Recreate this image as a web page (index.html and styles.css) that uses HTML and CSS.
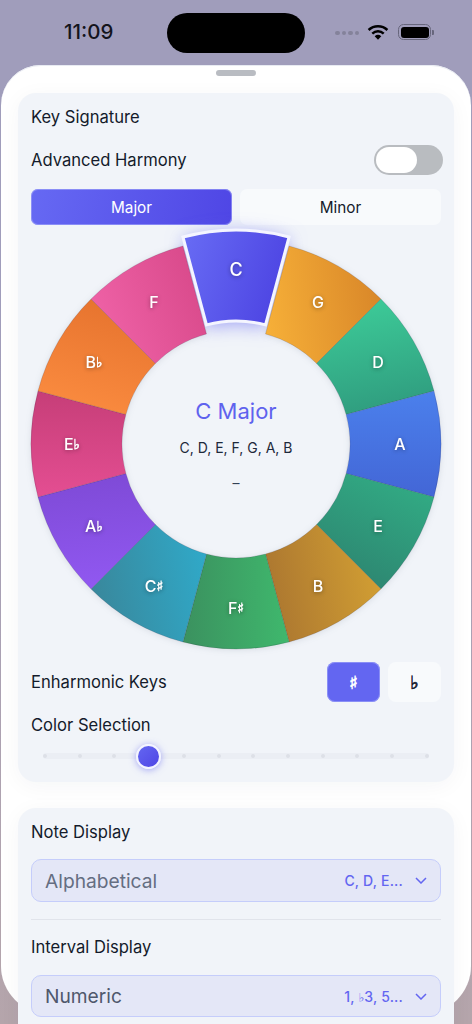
FILE: index.html
```html
<!DOCTYPE html>
<html lang="en">
<head>
<meta charset="utf-8">
<title>Key Signature</title>
<link rel="stylesheet" href="styles.css">
</head>
<body>
<div class="phone">
  <header class="status">
    <span class="time">11:09</span>
    <span class="island"></span>
    <span class="status-icons">
      <span class="signal"><i></i><i></i><i></i><i></i></span>
      <svg class="wifi" width="22" height="16" viewBox="0 0 22 16">
        <path class="wifi-arc" d="M1.6 6 A13.6 13.6 0 0 1 20.4 6"/>
        <path class="wifi-arc" d="M5.3 9.6 A8.4 8.4 0 0 1 16.7 9.6"/>
        <path class="wifi-dot" d="M7.7 12.2 L11 15.8 L14.3 12.2 A5 5 0 0 0 7.7 12.2Z"/>
      </svg>
      <span class="battery"><span class="battery-fill"></span></span>
      <span class="battery-cap"></span>
    </span>
  </header>

  <main class="sheet">
    <div class="grabber"></div>

    <section class="card card-key">
      <div class="label">Key Signature</div>
      <div class="row row-harmony">
        <span class="label">Advanced Harmony</span>
        <span class="toggle"><span class="toggle-thumb"></span></span>
      </div>
      <div class="segmented">
        <button class="seg seg-on">Major</button>
        <button class="seg">Minor</button>
      </div>

      <div class="wheel">
        <svg class="wheel-svg" width="410" height="410" viewBox="-205 -205 410 410">
          <defs>
            <linearGradient id="gC" x1="0" y1="0.3" x2="1" y2="0.6"><stop offset="0" stop-color="#6669f3"/><stop offset="1" stop-color="#4c43e2"/></linearGradient>
            <linearGradient id="gG" x1="0" y1="0.6" x2="1" y2="0.45"><stop offset="0" stop-color="#f6af38"/><stop offset="1" stop-color="#d98729"/></linearGradient>
            <linearGradient id="gD" x1="0.4" y1="0" x2="0.6" y2="1"><stop offset="0" stop-color="#3dcb98"/><stop offset="1" stop-color="#2f9b7e"/></linearGradient>
            <linearGradient id="gA" x1="0" y1="0" x2="0" y2="1"><stop offset="0" stop-color="#4b80ec"/><stop offset="1" stop-color="#4366d6"/></linearGradient>
            <linearGradient id="gE" x1="0.8" y1="0" x2="0.3" y2="1"><stop offset="0" stop-color="#32ad85"/><stop offset="1" stop-color="#2d8470"/></linearGradient>
            <linearGradient id="gB" x1="1" y1="0.4" x2="0" y2="0.6"><stop offset="0" stop-color="#d29f33"/><stop offset="1" stop-color="#ab7630"/></linearGradient>
            <linearGradient id="gFs" x1="1" y1="0.5" x2="0" y2="0.5"><stop offset="0" stop-color="#3fb86d"/><stop offset="1" stop-color="#3b915f"/></linearGradient>
            <linearGradient id="gCs" x1="1" y1="0.4" x2="0" y2="0.6"><stop offset="0" stop-color="#30a8c7"/><stop offset="1" stop-color="#39879b"/></linearGradient>
            <linearGradient id="gAb" x1="0.5" y1="1" x2="0.4" y2="0"><stop offset="0" stop-color="#9158f1"/><stop offset="1" stop-color="#7e4ad6"/></linearGradient>
            <linearGradient id="gEb" x1="0" y1="1" x2="0" y2="0"><stop offset="0" stop-color="#e44e92"/><stop offset="1" stop-color="#c63e78"/></linearGradient>
            <linearGradient id="gBb" x1="0.3" y1="1" x2="0.6" y2="0"><stop offset="0" stop-color="#fb8c40"/><stop offset="1" stop-color="#e6732e"/></linearGradient>
            <linearGradient id="gF" x1="0" y1="0.7" x2="1" y2="0.3"><stop offset="0" stop-color="#f063a8"/><stop offset="1" stop-color="#d8498a"/></linearGradient>
          </defs>
          <path class="wedge-glow" d="M-53.06-207.01A205 205 0 0 1 53.06-207.01L29.51-119.12A114 114 0 0 0 -29.51-119.12Z"/>
          <g id="wedges" class="wedges">
            <path fill="url(#gG)" d="M53.06-198.01A205 205 0 0 1 144.96-144.96L80.61-80.61A114 114 0 0 0 29.51-110.12Z"/>
            <path fill="url(#gD)" d="M144.96-144.96A205 205 0 0 1 198.01-53.06L110.12-29.51A114 114 0 0 0 80.61-80.61Z"/>
            <path fill="url(#gA)" d="M198.01-53.06A205 205 0 0 1 198.01 53.06L110.12 29.51A114 114 0 0 0 110.12-29.51Z"/>
            <path fill="url(#gE)" d="M198.01 53.06A205 205 0 0 1 144.96 144.96L80.61 80.61A114 114 0 0 0 110.12 29.51Z"/>
            <path fill="url(#gB)" d="M144.96 144.96A205 205 0 0 1 53.06 198.01L29.51 110.12A114 114 0 0 0 80.61 80.61Z"/>
            <path fill="url(#gFs)" d="M53.06 198.01A205 205 0 0 1 -53.06 198.01L-29.51 110.12A114 114 0 0 0 29.51 110.12Z"/>
            <path fill="url(#gCs)" d="M-53.06 198.01A205 205 0 0 1 -144.96 144.96L-80.61 80.61A114 114 0 0 0 -29.51 110.12Z"/>
            <path fill="url(#gAb)" d="M-144.96 144.96A205 205 0 0 1 -198.01 53.06L-110.12 29.51A114 114 0 0 0 -80.61 80.61Z"/>
            <path fill="url(#gEb)" d="M-198.01 53.06A205 205 0 0 1 -198.01-53.06L-110.12-29.51A114 114 0 0 0 -110.12 29.51Z"/>
            <path fill="url(#gBb)" d="M-198.01-53.06A205 205 0 0 1 -144.96-144.96L-80.61-80.61A114 114 0 0 0 -110.12-29.51Z"/>
            <path fill="url(#gF)" d="M-144.96-144.96A205 205 0 0 1 -53.06-198.01L-29.51-110.12A114 114 0 0 0 -80.61-80.61Z"/>
          </g>
          <path class="wedge-on" fill="url(#gC)" d="M-53.06-207.01A205 205 0 0 1 53.06-207.01L29.51-119.12A114 114 0 0 0 -29.51-119.12Z"/>
          <g class="keys">
            <text class="key-on" x="0" y="-175">C</text>
            <text x="82" y="-142">G</text>
            <text x="142" y="-82">D</text>
            <text x="164" y="0">A</text>
            <text x="142" y="82">E</text>
            <text x="82" y="142">B</text>
            <text x="0" y="164">F<tspan class="acc">♯</tspan></text>
            <text x="-82" y="142">C<tspan class="acc">♯</tspan></text>
            <text x="-142" y="82">A<tspan class="acc">♭</tspan></text>
            <text x="-164" y="0">E<tspan class="acc">♭</tspan></text>
            <text x="-142" y="-82">B<tspan class="acc">♭</tspan></text>
            <text x="-82" y="-142">F</text>
          </g>
        </svg>
        <div class="wheel-center">
          <div class="key-name">C Major</div>
          <div class="key-notes">C, D, E, F, G, A, B</div>
          <div class="key-dash">–</div>
        </div>
      </div>

      <div class="row row-enh">
        <span class="label">Enharmonic Keys</span>
        <span class="enh">
          <button class="enh-btn enh-on">♯</button>
          <button class="enh-btn">♭</button>
        </span>
      </div>

      <div class="label label-color">Color Selection</div>
      <div class="slider">
        <i></i><i></i><i></i><i></i><i></i><i></i><i></i><i></i><i></i><i></i><i></i><i></i>
        <span class="slider-thumb"></span>
      </div>
    </section>

    <section class="card card-display">
      <div class="label">Note Display</div>
      <div class="select">
        <span class="select-value">Alphabetical</span>
        <span class="select-hint">C, D, E...</span>
        <svg class="chevron" width="12" height="7" viewBox="0 0 12 7"><path d="M1 1 L6 6 L11 1"/></svg>
      </div>
      <div class="divider"></div>
      <div class="label">Interval Display</div>
      <div class="select select-last">
        <span class="select-value select-value-dark">Numeric</span>
        <span class="select-hint">1, <span class="hint-flat">♭</span>3, 5...</span>
        <svg class="chevron" width="12" height="7" viewBox="0 0 12 7"><path d="M1 1 L6 6 L11 1"/></svg>
      </div>
    </section>
  </main>
</div>
</body>
</html>
```

FILE: styles.css
```css
* { box-sizing: border-box; }
html, body { margin: 0; height: 100%; }
body {
  font-family: Inter, "DejaVu Sans", sans-serif;
  color: #1e293b;
  overflow: hidden;
  background: linear-gradient(180deg, #a09dbb 0%, #a09dbb 30%, #b5a5ab 100%);
}
button { font: inherit; border: 0; padding: 0; color: inherit; }
.phone { width: 472px; height: 1024px; overflow: hidden; }

/* status bar */
.status { height: 65px; display: flex; align-items: flex-start; padding: 13px 0 0 64px; }
.time { width: 103px; height: 40px; line-height: 38px; font-size: 20.5px; font-weight: 500; color: #14141c; }
.island { width: 138px; height: 40px; border-radius: 20px; background: #000; }
.status-icons { display: flex; align-items: center; height: 16px; margin: 11px 0 0 30px; }
.signal { display: flex; gap: 2px; margin: 2px 8px 0 0; }
.signal i { width: 4.5px; height: 4.5px; border-radius: 50%; background: #84829a; }
.wifi-arc { fill: none; stroke: #000; stroke-width: 2.5; }
.wifi-dot { fill: #000; }
.wifi { margin-right: 9px; }
.battery { width: 33px; height: 16px; border: 1.5px solid #67667c; border-radius: 5.5px; padding: 1.5px; display: block; }
.battery-fill { display: block; height: 100%; background: #000; border-radius: 3px; }
.battery-cap { width: 1.5px; height: 5px; margin-left: 1px; background: #67667c; border-radius: 0 1px 1px 0; }

/* sheet */
.sheet {
  height: 949px;
  margin: 0 1px;
  padding-top: 5px;
  border-radius: 40px 40px 48px 48px;
  background: #fff;
  box-shadow: inset 0 1px 0 #e8ebf2;
}
.grabber { width: 40px; height: 6px; margin: 0 auto 17px; border-radius: 3px; background: #b9bcc2; }
.card {
  margin: 0 17px 26px;
  padding: 14px 13px 23px;
  border-radius: 18px;
  background: #f1f4f9;
  box-shadow: 0 4px 22px rgba(30, 41, 59, 0.045);
}
.label { font-size: 16.6px; line-height: 20px; font-weight: 400; color: #141b2b; }
.row { display: flex; align-items: center; justify-content: space-between; }

.row-harmony { margin-top: 18px; height: 30px; }
.toggle { width: 69px; height: 30px; margin-right: -2px; padding: 2px; border-radius: 15px; background: #b9bcc0; display: block; }
.toggle-thumb { display: block; width: 41px; height: 26px; border-radius: 13px; background: #fff; }

.segmented { display: flex; gap: 8px; margin-top: 14px; }
.seg { flex: 1; height: 36px; border-radius: 7px; background: #f8fafc; font-size: 15.3px; font-weight: 400; color: #141b2b; }
.seg-on { background: linear-gradient(100deg, #6669f3, #4f46e5); color: #fff; box-shadow: 0 0 0 1px rgba(165, 170, 250, 0.6) inset; }

/* wheel */
.wheel { position: relative; width: 410px; height: 410px; margin-top: 14px; }
.wheel-svg { display: block; overflow: visible; }
.wedges { filter: drop-shadow(0 1px 3px rgba(71, 85, 105, 0.14)); }
.wedges path { stroke: rgba(40, 30, 60, 0.2); stroke-width: 0.8; }
.wedge-glow { fill: #6366f1; filter: drop-shadow(0 3px 9px rgba(99, 102, 241, 0.6)); }
.wedge-on { stroke: #f4f5ff; stroke-width: 3; }
.keys text {
  fill: #fff;
  font-family: Inter, "DejaVu Sans", sans-serif;
  font-size: 16px;
  font-weight: 500;
  text-anchor: middle;
  dominant-baseline: central;
  filter: drop-shadow(0 1px 2px rgba(0, 0, 0, 0.35));
}
.keys .key-on { font-size: 18px; font-weight: 500; }
.keys .acc { font-family: "DejaVu Sans", sans-serif; font-size: 14px; font-weight: 700; stroke: #fff; stroke-width: 0.5px; }
.wheel-center {
  position: absolute;
  left: 91px;
  top: 91px;
  width: 228px;
  height: 228px;
  text-align: center;
}
.key-name { margin-top: 67px; font-size: 22px; line-height: 28px; color: #5f62ee; }
.key-notes { margin-top: 14px; font-size: 14px; line-height: 18px; color: #1e293b; }
.key-dash { margin-top: 17px; font-size: 14px; line-height: 18px; color: #334155; }

/* enharmonic */
.row-enh { margin-top: 13px; height: 40px; }
.enh { display: flex; gap: 8px; }
.enh-btn { width: 53px; height: 40px; border-radius: 8px; background: #f8fafc; font-family: "DejaVu Sans", sans-serif; font-size: 18px; font-weight: 700; color: #1a2232; -webkit-text-stroke: 0.7px currentColor; }
.enh-on { background: #6366f1; color: #fff; box-shadow: 0 0 0 1px rgba(165, 170, 250, 0.6) inset; }

/* slider */
.label-color { margin-top: 13px; }
.slider { position: relative; display: flex; justify-content: space-between; align-items: center; height: 6px; margin: 18px 12px 0; border-radius: 3px; background: #ebeef4; }
.slider i { width: 4px; height: 4px; border-radius: 50%; background: #dde0e7; }
.slider-thumb {
  position: absolute;
  left: 93px;
  top: -9.5px;
  width: 25px;
  height: 25px;
  border: 2px solid #f3f4ff;
  border-radius: 50%;
  background: linear-gradient(135deg, #6366f1, #4f46e5);
  box-shadow: 0 1px 7px rgba(99, 102, 241, 0.55);
}

/* display card */
.card-display { padding-bottom: 60px; }
.select {
  display: flex;
  align-items: center;
  height: 43px;
  margin-top: 17px;
  padding: 0 13px;
  border: 1.5px solid #c5cdfb;
  border-radius: 10px;
  background: #e4e7f7;
}
.select-last { height: 42px; margin-top: 18px; }
.select-value { flex: 1; font-size: 19.2px; color: #656e82; }
.select-value-dark { color: #4f586c; }
.select-hint { font-size: 14px; font-weight: 500; color: #6366f1; letter-spacing: 0.2px; }
.hint-flat { font-family: "DejaVu Sans", sans-serif; font-size: 12px; font-weight: 700; }
.chevron { margin-left: 12px; }
.chevron path { fill: none; stroke: #6366f1; stroke-width: 1.5; }
.divider { height: 1px; margin: 17px 0; background: #e1e4eb; }
```
